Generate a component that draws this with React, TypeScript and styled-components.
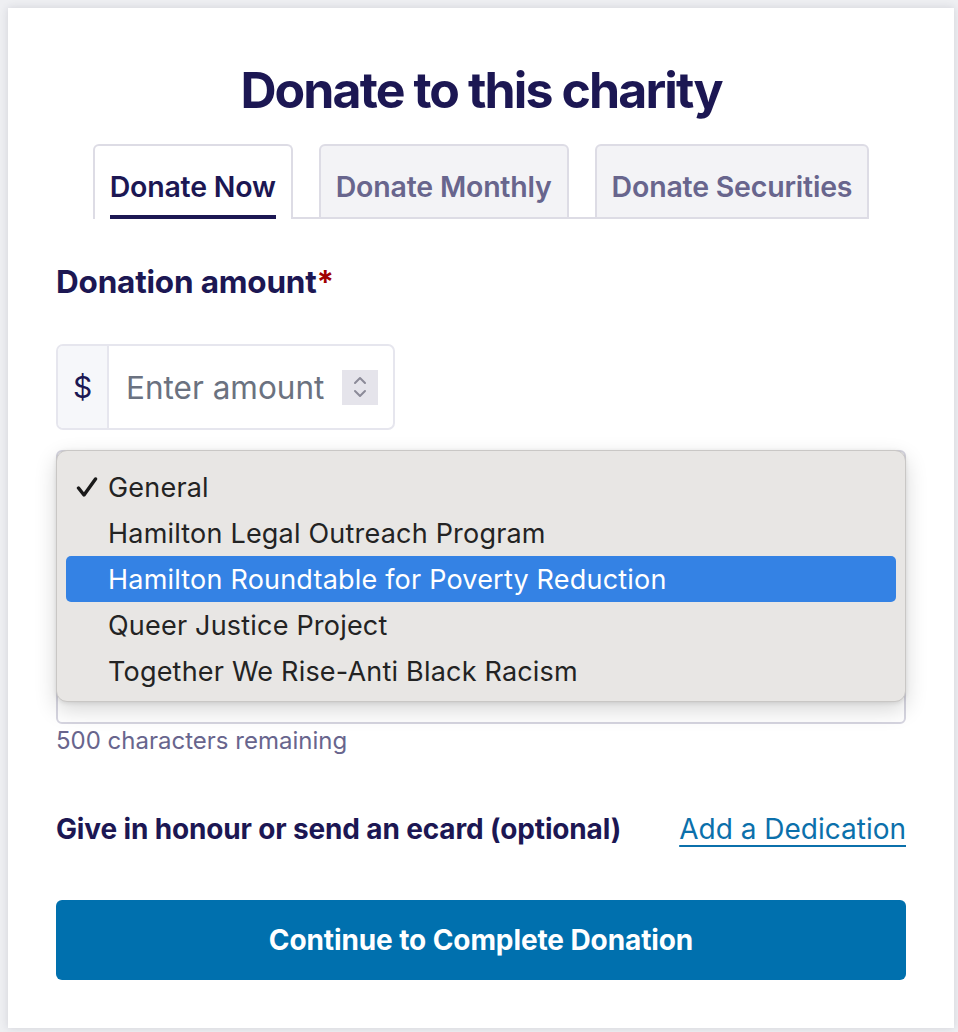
import React from 'react';
import styled, { createGlobalStyle } from 'styled-components';

const navy = '#1c1753';
const muted = '#68658d';

const GlobalStyle = createGlobalStyle`
  * {
    box-sizing: border-box;
  }
  body {
    margin: 0;
    background: #eeeff2;
    font-family: Inter, "Noto Sans", Arial, sans-serif;
  }
`;

const Page = styled.div`
  padding: 8px 4px 4px 8px;
`;

const Card = styled.div`
  width: 946px;
  height: 1020px;
  background: #ffffff;
  box-shadow: 0 0 8px rgba(40, 40, 70, 0.14);
  padding: 52px 48px 0;
`;

const Title = styled.h1`
  margin: 0;
  text-align: center;
  font-size: 50px;
  line-height: 60px;
  font-weight: 700;
  color: ${navy};
  letter-spacing: -1.9px;
`;

const TabRow = styled.div`
  display: flex;
  justify-content: center;
  margin-top: 24px;
`;

const TabList = styled.div`
  display: flex;
  gap: 26px;
  border-bottom: 2px solid #dddce5;
`;

const Tab = styled.button<{ $active?: boolean }>`
  height: 75px;
  margin-bottom: -2px;
  padding: 0 15px;
  border: 2px solid #dddce5;
  border-bottom: ${(p) => (p.$active ? 'none' : '2px solid #dddce5')};
  border-radius: 6px 6px 0 0;
  background: ${(p) => (p.$active ? '#ffffff' : '#f3f3f6')};
  color: ${(p) => (p.$active ? navy : muted)};
  font-family: inherit;
  font-size: 28.5px;
  font-weight: 600;
  letter-spacing: -0.2px;
  display: flex;
  align-items: flex-end;
`;

const TabText = styled.span<{ $active?: boolean }>`
  display: block;
  line-height: 34px;
  padding-bottom: ${(p) => (p.$active ? '11px' : '13px')};
  border-bottom: ${(p) => (p.$active ? `4px solid ${navy}` : 'none')};
`;

const Label = styled.div`
  margin-top: 45px;
  font-size: 31.5px;
  line-height: 36px;
  font-weight: 700;
  letter-spacing: -0.2px;
  color: ${navy};

  span {
    color: #a00000;
  }
`;

const AmountBox = styled.div`
  margin-top: 44px;
  width: 339px;
  height: 86px;
  display: flex;
  border: 2px solid #e6e6ee;
  border-radius: 7px;
  overflow: hidden;
`;

const Prefix = styled.div`
  width: 51px;
  background: #f6f7fa;
  border-right: 2px solid #e6e6ee;
  display: flex;
  align-items: center;
  justify-content: center;
  font-size: 30px;
  color: ${navy};
`;

const AmountInput = styled.div`
  flex: 1;
  display: flex;
  align-items: center;
  justify-content: space-between;
  padding: 0 15px 0 17px;
  font-size: 31.5px;
  color: #6b7280;
`;

const Spinner = styled.div`
  width: 36px;
  height: 35px;
  background: #e5e4eb;
  display: flex;
  align-items: center;
  justify-content: center;
`;

const FieldWrap = styled.div`
  position: relative;
  margin-top: 20px;
`;

const SelectBox = styled.div`
  height: 56px;
  border: 2px solid #d6d5e0;
  border-radius: 6px;
`;

const TextArea = styled.div`
  margin-top: 24px;
  height: 194px;
  border: 2px solid #d6d5e0;
  border-radius: 6px;
`;

const Menu = styled.ul`
  position: absolute;
  top: 0;
  left: 0;
  right: 0;
  height: 252px;
  margin: 0;
  padding: 13px 9px 8px;
  list-style: none;
  background: #e8e6e4;
  border: 1px solid #c9c7c5;
  border-radius: 11px;
  box-shadow: 0 8px 22px rgba(0, 0, 0, 0.16), 0 1px 4px rgba(0, 0, 0, 0.1);
`;

const MenuItem = styled.li<{ $hl?: boolean }>`
  position: relative;
  height: 46px;
  display: flex;
  align-items: center;
  padding-left: 42px;
  border-radius: 5px;
  font-size: 27px;
  letter-spacing: 0.2px;
  background: ${(p) => (p.$hl ? '#3482e4' : 'transparent')};
  color: ${(p) => (p.$hl ? '#ffffff' : '#232323')};
`;

const Check = styled.svg`
  position: absolute;
  left: 10px;
  top: 13px;
`;

const Helper = styled.div`
  margin-top: 3px;
  font-size: 24px;
  line-height: 28px;
  color: ${muted};
`;

const HonourRow = styled.div`
  margin-top: 57px;
  display: flex;
  justify-content: space-between;
  align-items: center;
`;

const HonourText = styled.div`
  font-size: 28px;
  font-weight: 700;
  letter-spacing: -0.15px;
  color: ${navy};
`;

const DedicationLink = styled.a`
  font-size: 28px;
  color: #0b70ab;
  text-decoration: underline;
  text-decoration-thickness: 2px;
  text-underline-offset: 6px;
`;

const ContinueButton = styled.button`
  margin-top: 54px;
  width: 100%;
  height: 80px;
  border: none;
  border-radius: 6px;
  background: #0070ae;
  color: #ffffff;
  font-family: inherit;
  font-size: 28px;
  font-weight: 700;
  letter-spacing: -0.1px;
`;

const designations = [
  'General',
  'Hamilton Legal Outreach Program',
  'Hamilton Roundtable for Poverty Reduction',
  'Queer Justice Project',
  'Together We Rise-Anti Black Racism',
];

export default function App() {
  return (
    <Page>
      <GlobalStyle />
      <Card>
        <Title>Donate to this charity</Title>
        <TabRow>
          <TabList>
            <Tab $active>
              <TabText $active>Donate Now</TabText>
            </Tab>
            <Tab>
              <TabText>Donate Monthly</TabText>
            </Tab>
            <Tab>
              <TabText>Donate Securities</TabText>
            </Tab>
          </TabList>
        </TabRow>

        <Label>
          Donation amount<span>*</span>
        </Label>
        <AmountBox>
          <Prefix>$</Prefix>
          <AmountInput>
            Enter amount
            <Spinner>
              <svg width="14" height="24" viewBox="0 0 14 24" fill="none" stroke="#8b8a98" strokeWidth="2" strokeLinecap="round" strokeLinejoin="round">
                <path d="M2 8 L7 3 L12 8" />
                <path d="M2 16 L7 21 L12 16" />
              </svg>
            </Spinner>
          </AmountInput>
        </AmountBox>

        <FieldWrap>
          <SelectBox />
          <TextArea />
          <Menu>
            {designations.map((d, i) => (
              <MenuItem key={d} $hl={i === 2}>
                {i === 0 && (
                  <Check width="22" height="20" viewBox="0 0 22 20" fill="none" stroke="#1a1a1a" strokeWidth="3.4" strokeLinecap="round" strokeLinejoin="round">
                    <path d="M2.5 11 L8 18 L19.5 2" />
                  </Check>
                )}
                {d}
              </MenuItem>
            ))}
          </Menu>
        </FieldWrap>
        <Helper>500 characters remaining</Helper>

        <HonourRow>
          <HonourText>Give in honour or send an ecard (optional)</HonourText>
          <DedicationLink href="#">Add a Dedication</DedicationLink>
        </HonourRow>

        <ContinueButton>Continue to Complete Donation</ContinueButton>
      </Card>
    </Page>
  );
}
